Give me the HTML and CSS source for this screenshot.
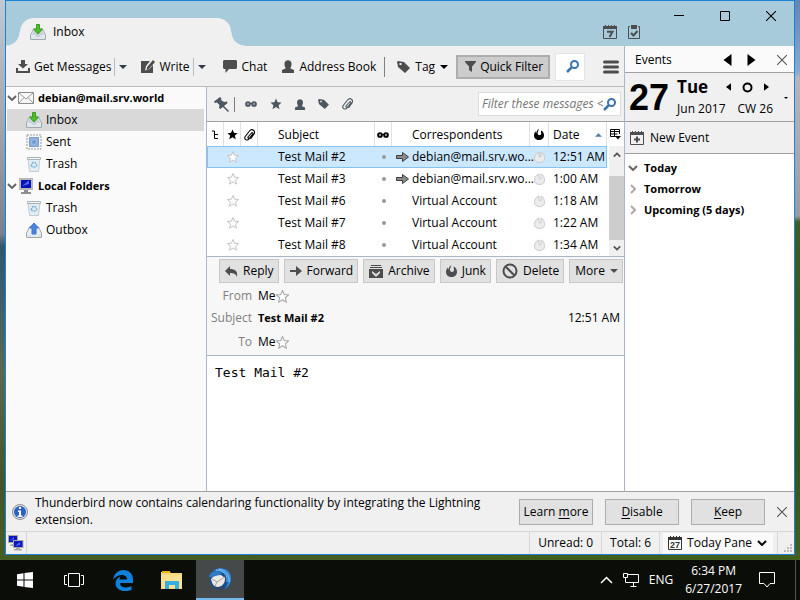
FILE: index.html
```html
<!DOCTYPE html>
<html lang="en">
<head>
<meta charset="utf-8">
<title>Inbox</title>
<link rel="stylesheet" href="styles.css">
</head>
<body>
<svg class="defs" aria-hidden="true">
  <defs>
    <symbol id="inbox" viewBox="0 0 16 16"><path d="M3.500 5h9l3 6v4.500H.5V11z" fill="#e9eef2" stroke="#a0a8ad"/><path d="M4 6h8l2 5h-3l-1 2H6l-1-2H2z" fill="#c8d0d5"/><path d="M1 12h4l1 1.500h4l1-1.500h4v3H1z" fill="#dfe8ee"/><path d="M6.500.5h3V5h3L8 10 3.500 5h3z" fill="#4cbf2c" stroke="#3a9a26"/></symbol>
    <symbol id="outbox" viewBox="0 0 16 16"><path d="M3.500 5h9l3 6v4.500H.5V11z" fill="#e9eef2" stroke="#a0a8ad"/><path d="M6 12V6H3.500L8 1l4.500 5H10v6z" fill="#4a86e0" stroke="#3f74cc"/><path d="M1 12h4l1 1.500h4l1-1.500h4v3H1z" fill="#dfe8ee"/></symbol>
    <symbol id="sent" viewBox="0 0 16 16"><path d="M1 1h14v14H1z" fill="#f8f8f8" stroke="#999" stroke-dasharray="2 1"/><path d="M3.500 3.500h9v9h-9z" fill="#8fb0de" stroke="#7c9fd2"/><circle cx="8" cy="8" r="2.500" fill="#7299d0" stroke="#a2bfe6"/></symbol>
    <symbol id="trash" viewBox="0 0 16 16"><path d="M2 2h12l-1.500 13.500h-9z" fill="#e3edf3" stroke="#c0ccd3"/><path d="M1.500 1.500h13v2h-13z" fill="#f3f7f9" stroke="#a9b4ba"/><path d="M5.500 10V7.500L8 6l2.500 1.500V10L8 11.500z" fill="none" stroke="#7fb2da" stroke-width="1.500" stroke-dasharray="2 1"/></symbol>
    <symbol id="envelope" viewBox="0 0 16 12"><path d="M.5.5h15v11H.5z" fill="#f8f8f8" stroke="#8c8c8c"/><path d="M1 1l7 6 7-6M1 11l5-5.500M15 11l-5-5.500" fill="none" stroke="#999"/></symbol>
    <symbol id="computer" viewBox="0 0 16 16"><path d="M1 0h14v12H1z" fill="#b9b9b9"/><path d="M3 2h10v8H3z" fill="#0b12b8"/><path d="M4 8l7-5.500V6z" fill="#4f6cf0"/><path d="M6 12h4v2h3v2H3v-2h3z" fill="#8f8f8f"/></symbol>
    <symbol id="network" viewBox="0 0 16 16"><path d="M0 0h10v8H0zM4 9h3v2H2v-1z" fill="#a8a8a8"/><path d="M1 1h8v6H1z" fill="#0b18c0"/><path d="M5 5h10.500v8H5zM8 13h4v1h2v1.500H6V14h2z" fill="#a8a8a8"/><path d="M6 6h8.500v6H6z" fill="#0b18c0"/><path d="M7 11l5-4v3zM2 6l4-4v2z" fill="#4f6cf0"/></symbol>
    <symbol id="download" viewBox="0 0 14 13"><path d="M5 0h4v4h3L7 8.500 2 4h3zM0 8h2v3h10V8h2v5H0z"/></symbol>
    <symbol id="write" viewBox="0 0 14 13"><path d="M0 1h9L5 6 4 10.500 8.500 9 12 5v8H0z"/><path d="M12 0l2 2-6 7-2.500 1L6.200 7z"/></symbol>
    <symbol id="chat" viewBox="0 0 14 13"><path d="M1 0h12l1 1v7l-1 1H6l-3.500 4V9H1L0 8V1z"/></symbol>
    <symbol id="person" viewBox="0 0 12 13"><path d="M2.500 3.500c0-4.500 7-4.500 7 0V5c0 1-1 2-1 3.500L12 10v3H0v-3l3.500-1.500C3.500 7 2.500 6 2.500 5z"/></symbol>
    <symbol id="tag" viewBox="0 0 13 12"><path fill-rule="evenodd" d="M0 1l1-1 6 1 6 6-5 5-7-6zM2.500 2v2h2V2z"/></symbol>
    <symbol id="funnel" viewBox="0 0 11 11"><path d="M0 0h11v1L7 5.500V11L4 9V5.500L0 1z"/></symbol>
    <symbol id="search" viewBox="0 0 13 13"><circle cx="8.500" cy="4.500" r="3.500" fill="none" stroke="currentColor" stroke-width="2"/><path d="M5.500 7.500L1 12" stroke="currentColor" stroke-width="2.500"/></symbol>
    <symbol id="menu" viewBox="0 0 16 14"><path d="M1.500 2h13M1.500 7h13M1.500 12h13" stroke="currentColor" stroke-width="3" stroke-linecap="round"/></symbol>
    <symbol id="pin" viewBox="0 0 15 15"><path d="M6 0l1.500 1.500L7 3l3 2 3-.5.5 1.500L6.500 12 5 11l.5-3L3 5.500 1 6 0 4.500z"/><path d="M9 9l5.500 5.500" stroke="currentColor" stroke-width="1.500"/></symbol>
    <symbol id="glasses" viewBox="0 0 12 6"><path d="M5 2.500h2" stroke="currentColor"/><circle cx="3" cy="3" r="2" fill="#999" stroke="currentColor" stroke-width="1.700"/><circle cx="9" cy="3" r="2" fill="#999" stroke="currentColor" stroke-width="1.700"/></symbol>
    <symbol id="star" viewBox="0 0 12 12"><path d="M6 .5l1.600 3.700 4 .3-3 2.700.9 4L6 9l-3.500 2.200.9-4-3-2.700 4-.3z"/></symbol>
    <symbol id="clip" viewBox="0 0 11 12"><path d="M3.500 8.500L7.500 4c.8-1 2 .2 1.200 1.200L5 9.800C3 12.500-.5 10 1.200 7.500L5.500 2c2.500-3 6.500 0 4.500 3L6.500 10M3.500 8.500c.5.700 1 .7 1.500.3" fill="none" stroke="currentColor" stroke-width="1.100"/></symbol>
    <symbol id="thread" viewBox="0 0 6 10"><path d="M0 1h2.500v7.500H6M2.500 4.500H6" fill="none" stroke="currentColor"/></symbol>
    <symbol id="flame" viewBox="0 0 11 12"><path d="M5.500 0C4.800 2 4 3 4 5c0 2.500 4 2.500 4 0 0-1.500-.6-2-.2-3.500C10 2.500 11 4.500 11 7c0 3-2.500 5-5.500 5S0 10 0 7c0-2 1-3 1.300-4.500.7.700.7 1.500 1 2.500C2.500 3 3.500 1 5.500 0z"/></symbol>
    <symbol id="unjunk" viewBox="0 0 11 12"><path d="M5 1C2 2 .5 4.500.5 7.500c0 2.500 2 4 5 4s5-1.500 5-4c0-3-1-5.500-3.500-6.500v4c0 1.500-2 1.500-2 0z"/></symbol>
    <symbol id="columns" viewBox="0 0 11 11"><path d="M9.500 5V.5h-9v7H6M.5 2.500h9M.5 5h7M4.500.5v7" fill="none" stroke="currentColor"/><path d="M5 7h6L8 10.500z"/></symbol>
    <symbol id="down" viewBox="0 0 8 4"><path d="M0 0h8L4 4z"/></symbol>
    <symbol id="up" viewBox="0 0 8 4"><path d="M0 4h8L4 0z"/></symbol>
    <symbol id="left" viewBox="0 0 8 12"><path d="M8 0v12L0 6z"/></symbol>
    <symbol id="right" viewBox="0 0 8 12"><path d="M0 0v12l8-6z"/></symbol>
    <symbol id="chev" viewBox="0 0 10 6"><path d="M1 1l4 4 4-4" fill="none" stroke="currentColor" stroke-width="2"/></symbol>
    <symbol id="close" viewBox="0 0 10 10"><path d="M0 0l10 10M10 0L0 10" stroke="currentColor" stroke-width="1.100"/></symbol>
    <symbol id="arrow" viewBox="0 0 13 10"><path d="M.5 3.500h6v-3L12.500 5l-6 4.500v-3h-6z" fill="#8b8b8b" stroke="#3f3f3f"/></symbol>
    <symbol id="calendar" viewBox="0 0 14 14"><path d="M.5 3v10.500h13V3" fill="none" stroke="currentColor"/><path d="M0 1h2V0h1v1h2V0h1v1h2V0h1v1h2V0h1v1h2v3H0z"/></symbol>
    <symbol id="reply" viewBox="0 0 13 11"><path d="M5 0v3c5 0 8 2 7 8-1-3-3-4-7-4v3L0 5z"/></symbol>
    <symbol id="forward" viewBox="0 0 12 10"><path d="M0 4h6V0l6 5-6 5V6H0z"/></symbol>
    <symbol id="archive" viewBox="0 0 14 13"><path d="M2 .5h10M1 2.500h12" stroke="currentColor"/><path fill-rule="evenodd" d="M0 4h14v9H0zM3 6v2l4 4 4-4V6L7 9z"/></symbol>
    <symbol id="block" viewBox="0 0 16 16"><circle cx="8" cy="8" r="6.500" fill="none" stroke="currentColor" stroke-width="2"/><path d="M3.500 3.500l9 9" stroke="currentColor" stroke-width="2"/></symbol>
  </defs>
</svg>

<main class="window">
  <header class="titlebar">
    <div class="tab">
      <svg class="i16"><use href="#inbox"/></svg><span>Inbox</span>
    </div>
    <div class="title-side">
      <div class="caption">
        <button aria-label="Minimize"><svg width="10" height="10"><path d="M0 4.500h10" stroke="#000"/></svg></button>
        <button aria-label="Maximize"><svg width="10" height="10"><path d="M.5.5h9v9h-9z" fill="none" stroke="#000"/></svg></button>
        <button aria-label="Close"><svg width="10" height="10"><use href="#close"/></svg></button>
      </div>
      <div class="cal-buttons">
        <button aria-label="Calendar"><svg width="14" height="14" viewBox="0 0 14 14"><use href="#calendar"/><path d="M4 6.800h5.500L6.500 12" fill="none" stroke="currentColor" stroke-width="2"/></svg></button>
        <button aria-label="Tasks"><svg width="12" height="14" viewBox="0 0 12 14"><path d="M2 1.500H.5v12h11v-12H10" fill="none" stroke="currentColor"/><path d="M3 0h6v4H3z"/><path d="M3 8l2.500 2.500L9.500 6" fill="none" stroke="currentColor" stroke-width="2"/></svg></button>
      </div>
    </div>
  </header>

  <div class="main">
    <section class="left">
      <div class="toolbar">
        <button class="tool"><svg width="14" height="13"><use href="#download"/></svg>Get Messages</button>
        <button class="drop" aria-label="Get messages menu"><svg width="8" height="4"><use href="#down"/></svg></button>
        <button class="tool"><svg width="14" height="13"><use href="#write"/></svg>Write</button>
        <button class="drop" aria-label="Write menu"><svg width="8" height="4"><use href="#down"/></svg></button>
        <button class="tool chat"><svg width="14" height="13"><use href="#chat"/></svg>Chat</button>
        <button class="tool book"><svg width="12" height="13"><use href="#person"/></svg>Address Book</button>
        <span class="rule"></span>
        <button class="tool tagb"><svg width="13" height="12"><use href="#tag"/></svg>Tag<svg width="8" height="4"><use href="#down"/></svg></button>
        <button class="tool quick"><svg width="11" height="11"><use href="#funnel"/></svg>Quick Filter</button>
        <button class="find" aria-label="Search"><svg width="13" height="13"><use href="#search"/></svg></button>
        <button class="menu" aria-label="Menu"><svg width="16" height="14"><use href="#menu"/></svg></button>
      </div>

      <div class="panes">
        <nav class="folders">
          <a href="#" class="account"><svg class="twist" width="10" height="6"><use href="#chev"/></svg><svg width="16" height="12"><use href="#envelope"/></svg>debian@mail.srv.world</a>
          <a href="#" class="folder on"><svg class="i16"><use href="#inbox"/></svg>Inbox</a>
          <a href="#" class="folder"><svg class="i16"><use href="#sent"/></svg>Sent</a>
          <a href="#" class="folder"><svg class="i16"><use href="#trash"/></svg>Trash</a>
          <a href="#" class="account"><svg class="twist" width="10" height="6"><use href="#chev"/></svg><svg class="i16"><use href="#computer"/></svg>Local Folders</a>
          <a href="#" class="folder"><svg class="i16"><use href="#trash"/></svg>Trash</a>
          <a href="#" class="folder"><svg class="i16"><use href="#outbox"/></svg>Outbox</a>
        </nav>

        <div class="content">
          <div class="filterbar">
            <button aria-label="Keep filters"><svg width="15" height="15"><use href="#pin"/></svg></button>
            <span class="short-rule"></span>
            <button aria-label="Unread"><svg width="12" height="6"><use href="#glasses"/></svg></button>
            <button aria-label="Starred"><svg width="12" height="12"><use href="#star"/></svg></button>
            <button aria-label="Contact"><svg width="10" height="11"><use href="#person"/></svg></button>
            <button aria-label="Tags"><svg width="11" height="10"><use href="#tag"/></svg></button>
            <button aria-label="Attachment"><svg width="11" height="12"><use href="#clip"/></svg></button>
            <label class="filter"><input type="text" aria-label="Filter these messages" placeholder="Filter these messages &lt;Ctrl+Shift+K&gt;"><svg width="13" height="13"><use href="#search"/></svg></label>
          </div>

          <table class="messages">
            <colgroup><col class="c17"><col class="c17"><col class="c17"><col><col class="c17"><col class="c-cor"><col class="c-junk"><col class="c-date"><col class="c-end"></colgroup>
            <thead>
              <tr>
                <th aria-label="Thread"><svg width="6" height="10"><use href="#thread"/></svg></th>
                <th aria-label="Starred"><svg width="11" height="11"><use href="#star"/></svg></th>
                <th aria-label="Attachment"><svg width="11" height="12"><use href="#clip"/></svg></th>
                <th class="subj">Subject</th>
                <th aria-label="Read"><svg width="12" height="6"><use href="#glasses"/></svg></th>
                <th class="cor">Correspondents</th>
                <th aria-label="Junk"><svg width="10" height="11"><use href="#flame"/></svg></th>
                <th class="date"><span>Date<svg width="7" height="4"><use href="#up"/></svg></span></th>
                <th aria-label="Columns"><svg width="11" height="11"><use href="#columns"/></svg></th>
              </tr>
            </thead>
            <tbody>
              <tr class="sel"><td></td><td class="st"><svg width="12" height="12"><use href="#star"/></svg></td><td></td><td class="subj">Test Mail #2</td><td><i class="dot"></i></td><td class="cor to"><svg width="13" height="10"><use href="#arrow"/></svg>debian@mail.srv.wo...</td><td class="jk"><svg width="11" height="12"><use href="#unjunk"/></svg></td><td class="date">12:51 AM</td>
                <td class="bar" rowspan="5"><div class="scroll"><svg width="8" height="6"><use href="#chev" transform="rotate(180 4 3)"/></svg><span></span><svg width="8" height="6"><use href="#chev"/></svg></div></td></tr>
              <tr><td></td><td class="st"><svg width="12" height="12"><use href="#star"/></svg></td><td></td><td class="subj">Test Mail #3</td><td><i class="dot"></i></td><td class="cor to"><svg width="13" height="10"><use href="#arrow"/></svg>debian@mail.srv.wo...</td><td class="jk"><svg width="11" height="12"><use href="#unjunk"/></svg></td><td class="date">1:00 AM</td></tr>
              <tr><td></td><td class="st"><svg width="12" height="12"><use href="#star"/></svg></td><td></td><td class="subj">Test Mail #6</td><td><i class="dot"></i></td><td class="cor">Virtual Account</td><td class="jk"><svg width="11" height="12"><use href="#unjunk"/></svg></td><td class="date">1:18 AM</td></tr>
              <tr><td></td><td class="st"><svg width="12" height="12"><use href="#star"/></svg></td><td></td><td class="subj">Test Mail #7</td><td><i class="dot"></i></td><td class="cor">Virtual Account</td><td class="jk"><svg width="11" height="12"><use href="#unjunk"/></svg></td><td class="date">1:22 AM</td></tr>
              <tr><td></td><td class="st"><svg width="12" height="12"><use href="#star"/></svg></td><td></td><td class="subj">Test Mail #8</td><td><i class="dot"></i></td><td class="cor">Virtual Account</td><td class="jk"><svg width="11" height="12"><use href="#unjunk"/></svg></td><td class="date">1:34 AM</td></tr>
            </tbody>
          </table>

          <article class="reader">
            <div class="head">
              <div class="actions">
                <button><svg width="13" height="11"><use href="#reply"/></svg>Reply</button>
                <button><svg width="12" height="10"><use href="#forward"/></svg>Forward</button>
                <button><svg width="14" height="13"><use href="#archive"/></svg>Archive</button>
                <button><svg width="11" height="12"><use href="#flame"/></svg>Junk</button>
                <button><svg width="16" height="16"><use href="#block"/></svg>Delete</button>
                <button>More<svg width="8" height="4"><use href="#down"/></svg></button>
              </div>
              <div class="field"><span class="name">From</span><span>Me</span><svg class="fstar" width="13" height="13"><use href="#star"/></svg></div>
              <div class="field"><span class="name">Subject</span><b>Test Mail #2</b><time>12:51 AM</time></div>
              <div class="field last"><span class="name">To</span><span>Me</span><svg class="fstar" width="13" height="13"><use href="#star"/></svg></div>
            </div>
            <pre class="body">Test Mail #2</pre>
          </article>
        </div>
      </div>
    </section>

    <aside class="events">
      <div class="ev-title"><span>Events</span>
        <button aria-label="Previous"><svg width="9" height="12"><use href="#left"/></svg></button>
        <button aria-label="Next"><svg width="9" height="12"><use href="#right"/></svg></button>
        <button class="x" aria-label="Close pane"><svg width="10" height="10"><use href="#close"/></svg></button>
      </div>
      <div class="ev-day">
        <strong class="num">27</strong>
        <div class="info">
          <div class="line"><strong>Tue</strong><span class="nav"><button aria-label="Previous day"><svg width="5" height="8"><use href="#left"/></svg></button><button aria-label="Today"><svg width="11" height="11"><circle cx="5.500" cy="5.500" r="4" fill="none" stroke="#000" stroke-width="2"/></svg></button><button aria-label="Next day"><svg width="5" height="8"><use href="#right"/></svg></button></span></div>
          <div class="line"><span>Jun 2017</span><span>CW 26</span></div>
        </div>
        <button class="mini" aria-label="Show calendar"><svg width="4" height="2"><use href="#down"/></svg></button>
      </div>
      <button class="new"><svg width="14" height="14" viewBox="0 0 14 14"><use href="#calendar"/><path d="M4 8.500h6M7 5.500v6" stroke="currentColor" stroke-width="2"/></svg>New Event</button>
      <div class="agenda">
        <a href="#"><svg width="10" height="6"><use href="#chev"/></svg>Today</a>
        <a href="#" class="shut"><svg width="10" height="6"><use href="#chev"/></svg>Tomorrow</a>
        <a href="#" class="shut"><svg width="10" height="6"><use href="#chev"/></svg>Upcoming (5 days)</a>
      </div>
    </aside>
  </div>

  <div class="notice">
    <svg width="16" height="16" viewBox="0 0 16 16"><circle cx="8" cy="8" r="7.500" fill="#e4e4e4" stroke="#8e8e8e"/><circle cx="8" cy="8" r="6" fill="#2a62c9"/><path d="M7 3h2v2H7zM6 6.500h3v5h1.500V13h-5v-1.500H7V8H6z" fill="#fff"/></svg>
    <p>Thunderbird now contains calendaring functionality by integrating the Lightning extension.</p>
    <button class="btn">Learn <u>m</u>ore</button>
    <button class="btn"><u>D</u>isable</button>
    <button class="btn"><u>K</u>eep</button>
    <button class="x" aria-label="Dismiss"><svg width="10" height="10"><use href="#close"/></svg></button>
  </div>

  <footer class="status">
    <span class="net"><svg width="16" height="16"><use href="#network"/></svg></span>
    <span class="cell unread">Unread: 0</span>
    <span class="cell total">Total: 6</span>
    <span class="cell pane"><button><span class="cal27"><svg width="14" height="14"><use href="#calendar"/></svg><b>27</b></span>Today Pane<svg width="10" height="6"><use href="#chev"/></svg></button></span>
    <span class="grip"><svg width="8" height="8"><path d="M6 0h2v2H6zM3 3h2v2H3zM6 3h2v2H6zM0 6h2v2H0zM3 6h2v2H3zM6 6h2v2H6z" fill="#bbb"/></svg></span>
  </footer>
</main>

<footer class="taskbar">
  <button aria-label="Start"><svg width="16" height="16"><path d="M0 2.300l6.500-1v6.200H0zM7.500 1.100L16 0v7.500H7.500zM0 8.500h6.500v6.200l-6.500-1zM7.500 8.500H16V16l-8.500-1.100z" fill="#fff"/></svg></button>
  <button aria-label="Task view"><svg width="20" height="14"><path d="M4.500.5h11v13h-11zM3 2.500H.5v9H3M17 2.500h2.500v9H17" fill="none" stroke="#fff"/></svg></button>
  <button class="edge" aria-label="Edge"><svg width="20" height="21" viewBox="0 0 20 21"><path d="M0 9.500C1 4 5 0 10.500 0 16 0 20 4 20 9.500V13H7c0 5 7 5.500 11.500 3v4C11 23 2.500 20 2.500 13.500 2.600 10 5 7.500 7.500 6.500 6.800 7.500 6.500 8.500 6.500 9.500h7.500C14 3.500 5 3.500 0 9.500z" fill="#0f80dc"/></svg></button>
  <button aria-label="File Explorer"><svg width="22" height="18"><path d="M0 1h9l1 1h11v16H0z" fill="#f8d778"/><path d="M1 0h8v2H1z" fill="#eeb11c"/><path d="M0 4h21v13H0z" fill="#fbe08f"/><path d="M4 18v-8h14v8h-4v-4H8v4z" fill="#35aee2"/></svg></button>
  <button class="active" aria-label="Thunderbird"><svg width="24" height="24" viewBox="0 0 24 24"><circle cx="12.500" cy="12" r="11" fill="#1b4f8c"/><path d="M5 4c5-4 12-3.500 16 1 4 6 2 14-5 17.500 4-4 5-9 3-13C16 5 10 3 5 4z" fill="#3b8bd6"/><path d="M11 2c6 1 11 6 10 13M8 3c7 0 12 5 11 12" fill="none" stroke="#7cc0f2"/><path d="M1 10c0-3 3-6 8-6 2 0 4 1 5 3L4 10z" fill="#2f7cc6"/><path d="M3 12c2-3 6-4 10-4l4 3c0 5-2 8-7 9-4 0-6-3-7-8z" fill="#ece9e4"/><path d="M4 12l5 3 8-5M9 15l-2 4" fill="none" stroke="#a8a098"/><path d="M6 19c3 3 8 2 11-1l-2 4c-4 1-7 0-9-3z" fill="#3c4452"/></svg></button>
  <div class="tray">
    <svg width="13" height="8"><path d="M1 7l5.500-5.500L12 7" fill="none" stroke="#fff" stroke-width="1.500"/></svg>
    <svg width="16" height="14"><path d="M4 1.500h11.500v8H4M7.500 13.500h6M10.500 9.500v4M.5.500h4v4h-4zM2.500 4.500v5h2" fill="none" stroke="#fff"/></svg>
    <span>ENG</span>
    <time>6:34 PM<br>6/27/2017</time>
    <svg width="16" height="16"><path d="M.5.500h15v11h-4.500l-3 3.500-3-3.500H.5z" fill="none" stroke="#fff"/></svg>
    <i></i>
  </div>
</footer>
</body>
</html>
```

FILE: styles.css
```css
* { box-sizing: border-box; }
body {
  margin: 0;
  min-height: 100vh;
  display: flex;
  flex-direction: column;
  font: 12px/16px "Open Sans", "Noto Sans", sans-serif;
  color: #000;
  background:
    linear-gradient(#5f86b5, #88aad0 12%, #b9b6bb 13%, #9a9ca3 36%, #405c25 37%, #35521c 75%, #46651f) right / 50% 100% no-repeat,
    linear-gradient(#c4c8d0, #a3a7b2 20%, #77818f 39%, #33566f 41%, #3d5f6e 50%, #586a4e 62%, #42572a 80%, #486022);
}
.defs { position: absolute; width: 0; height: 0; }
svg { flex: none; display: block; fill: currentColor; }
.i16 { width: 16px; height: 16px; }
button {
  display: flex;
  align-items: center;
  padding: 0;
  border: 0;
  background: none;
  font: inherit;
  color: inherit;
  white-space: nowrap;
}
a { color: inherit; text-decoration: none; }

.window {
  flex: 1;
  display: flex;
  flex-direction: column;
  margin: 0 5px 5px;
  border: 1px solid #1883d7;
  background: #f0f0f0;
}

.titlebar {
  display: flex;
  justify-content: space-between;
  height: 45px;
  background: #a8cbdb;
}
.tab {
  position: relative;
  align-self: flex-end;
  display: flex;
  align-items: center;
  gap: 7px;
  width: 211px;
  height: 28px;
  margin-left: 14px;
  padding-left: 10px;
  border-radius: 14px 14px 0 0;
  background: #f0f0f0;
}
.tab::before, .tab::after {
  content: "";
  position: absolute;
  bottom: 0;
  width: 14px;
  height: 14px;
}
.tab::before { left: -14px; background: radial-gradient(circle at 0 0, transparent 13px, #f0f0f0 14px); }
.tab::after { right: -14px; background: radial-gradient(circle at 100% 0, transparent 13px, #f0f0f0 14px); }
.title-side { display: flex; flex-direction: column; }
.caption { display: flex; height: 24px; padding-top: 6px; }
.caption button { width: 46px; justify-content: center; }
.cal-buttons { display: flex; gap: 11px; margin-left: -53px; color: #4d4d4d; }

.main { flex: 1; display: flex; min-height: 0; }
.left { flex: 1; min-width: 0; display: flex; flex-direction: column; }

.toolbar {
  display: flex;
  align-items: center;
  height: 41px;
  padding: 1px 5px 0 10px;
  border-bottom: 1px solid #bcbcbc;
}
.toolbar > * { flex: none; }
.tool { gap: 4px; }
.tool > svg:first-child, .menu { color: #4d4d4d; }
.drop {
  height: 18px;
  margin: 0 14px 0 3px;
  padding-left: 4px;
  border-left: 1px solid #bcbcbc;
  color: #2f3b47;
}
.chat { gap: 5px; margin-left: 3px; }
.book { margin-left: 15px; gap: 5px; }
.rule { width: 1px; height: 20px; margin: 0 12px 0 8px; background: #808080; }
.tagb { gap: 5px; }
.quick {
  gap: 4px;
  height: 24px;
  margin-left: 8px;
  padding: 0 5px 0 7px;
  border: 2px solid #adadad;
  background: #cccccc;
}
.find {
  justify-content: center;
  padding-left: 4px;
  width: 30px;
  height: 28px;
  margin: 0 auto 0 5px;
  border: 1px solid #e4e4e4;
  background: #fff;
  color: #3b74ad;
}

.panes { flex: 1; display: flex; min-height: 0; }
.folders { width: 200px; padding-right: 2px; background: #fafafa; }
.folders a { display: flex; align-items: center; height: 22px; }
.account { gap: 4px; padding-left: 1px; font-size: 11px; font-weight: 700; }
.twist { margin-right: -3px; color: #666; }
.folder { gap: 4px; margin-left: 1px; padding-left: 19px; }
.on { background: #d9d9d9; }

.content {
  flex: 1;
  min-width: 0;
  display: flex;
  flex-direction: column;
  border-left: 1px solid #a9b7c9;
}
.filterbar {
  display: flex;
  align-items: center;
  gap: 13px;
  height: 35px;
  padding: 0 3px 0 7px;
  border-bottom: 1px solid #a0a0a0;
  color: #4b5763;
}
.short-rule { width: 1px; height: 15px; margin: 0 -3px 0 -8px; background: #808080; }
.filter {
  display: flex;
  align-items: center;
  width: 143px;
  height: 24px;
  margin-left: auto;
  padding: 0 4px 0 3px;
  border: 1px solid #dcdcdc;
  background: #fff;
  color: #3b74ad;
}
.filter input {
  flex: 1;
  min-width: 0;
  padding: 0;
  border: 0;
  outline: 0;
  font: inherit;
  background: none;
}
.filter input::placeholder { color: #757575; font-style: italic; opacity: 1; }

.messages {
  width: 100%;
  table-layout: fixed;
  border-spacing: 0;
  background: #fff;
  border-bottom: 1px solid #a9b7c9;
}
.c17 { width: 17px; }
.c-cor { width: 138px; }
.c-junk { width: 19px; }
.c-date { width: 58px; }
.c-end { width: 17px; }
.messages th, .messages td {
  height: 22px;
  padding: 0;
  font-weight: 400;
  text-align: left;
  white-space: nowrap;
}
.messages th { height: 24px; padding-top: 1px; border-right: 1px solid #e0e0e0; }
.messages th:last-child { border: 0; }
.messages svg { margin: 0 auto; }
.messages .subj { padding-left: 20px; }
.messages .cor { padding-left: 20px; }
.messages .to { padding-left: 4px; }
.to svg { display: inline-block; margin: 0 3px 0 0; vertical-align: -1px; }
.messages .date { padding-left: 4px; }
.date span { display: flex; align-items: center; justify-content: space-between; }
.date span svg { margin: 0 4px 0 0; color: #4a7d9f; }
.st svg { fill: #fcfcfc; stroke: #c4c4c4; }
.jk svg { fill: #ececec; stroke: #c8c8c8; }
.dot { display: block; width: 4px; height: 4px; margin: 0 auto; border-radius: 50%; background: #999; }
.sel td:not(.bar) { background: #cce8ff; border: solid #84c3f5; border-width: 1px 0; }
.sel td:first-child { border-left-width: 1px; }
.messages .sel td.date { border-right-width: 1px; }
.messages .bar { height: 110px; padding-left: 2px; }
.scroll {
  display: flex;
  flex-direction: column;
  align-items: center;
  height: 110px;
  padding: 6px 0 5px;
  background: #f0f0f0;
  color: #505050;
}
.scroll span { width: 100%; height: 64px; margin: 18px 0 auto; background: #cdcdcd; }

.reader { flex: 1; display: flex; flex-direction: column; }
.head { padding: 2px 1px 0 12px; border-bottom: 1px solid #a9b7c9; background: #f7f7f7; }
.actions { display: flex; justify-content: space-between; }
.actions button {
  gap: 5px;
  height: 24px;
  padding: 0 4px 0 5px;
  border: 1px solid #c8c8c8;
  background: #e1e1e1;
}
.actions svg { color: #4d4d4d; }
.field { display: flex; align-items: center; height: 22px; margin: 2px 3px 0 -8px; }
.field + .field { margin-top: 0; }
.field .name { width: 41px; margin-right: 6px; text-align: right; color: #808080; }
.field b { font-size: 11px; }
.field time { margin-left: auto; }
.field.last { height: 26px; }
.fstar { fill: #fff; stroke: #a8a8a8; }
.body {
  flex: 1;
  margin: 0;
  padding: 9px 8px;
  background: #fff;
  font: 13px/16px "DejaVu Sans Mono", monospace;
}

.events {
  width: 170px;
  display: flex;
  flex-direction: column;
  border-left: 1px solid #a9b7c9;
  background: #fff;
}
.ev-title {
  display: flex;
  align-items: center;
  gap: 15px;
  height: 27px;
  padding: 1px 7px 0 10px;
  border-bottom: 1px solid #a0a0a0;
  background: #fafafa;
}
.ev-title span { margin-right: auto; }
.ev-title .x { margin-left: 6px; }
.x { color: #555; }
.ev-day {
  display: flex;
  align-items: center;
  height: 49px;
  padding: 2px 0 0 4px;
  border-bottom: 1px solid #a0a0a0;
  background: #f0f0f0;
}
.num { font: 700 36px/40px "Liberation Sans", Arial, sans-serif; }
.info { width: 96px; margin-left: 8px; }
.line { display: flex; align-items: center; justify-content: space-between; height: 22px; }
.line strong { font-size: 17px; }
.nav { display: flex; align-items: center; gap: 11px; margin-right: 4px; }
.mini { margin: 0 6px 0 auto; }
.new {
  gap: 6px;
  height: 32px;
  padding-left: 5px;
  border-bottom: 1px solid #a0a0a0;
  background: #f0f0f0;
}
.new svg { color: #4d4d4d; }
.agenda { padding-top: 3px; font-size: 11px; font-weight: 700; }
.agenda a { display: flex; align-items: center; gap: 6px; height: 21px; padding-left: 3px; }
.agenda svg { color: #666; }
.shut svg { transform: rotate(-90deg); color: #aaa; }

.notice {
  display: flex;
  align-items: center;
  height: 40px;
  padding: 0 7px 0 6px;
  border-top: 1px solid #a0a0a0;
}
.notice p { flex: 1; align-self: flex-start; margin: 2px 20px 0 7px; line-height: 17px; }
.btn {
  display: block;
  text-align: center;
  width: 74px;
  height: 26px;
  margin-right: 12px;
  border: 1px solid #adadad;
  background: #e1e1e1;
}
.btn u { text-underline-offset: 2px; }

.status { display: flex; height: 23px; border-top: 1px solid #d7d7d7; }
.status > span { display: flex; align-items: center; }
.net { width: 21px; padding-left: 2px; border-right: 1px solid #d7d7d7; margin-right: auto; }
.status .net { margin-right: auto; }
.cell { border-left: 1px solid #d7d7d7; }
.unread, .total { padding: 0 8px; }
.pane { padding-left: 3px; }
.pane button { gap: 5px; height: 20px; padding: 0 6px 0 5px; background: #fafafa; }
.cal27 { display: grid; place-items: center; color: #333; }
.cal27 > * { grid-area: 1 / 1; }
.cal27 b { padding-top: 4px; font: 700 9px/10px "Liberation Sans", sans-serif; }
.grip { width: 17px; margin-left: 4px; border-left: 1px solid #d7d7d7; justify-content: flex-end; padding: 9px 2px 0 0; }

.taskbar { display: flex; height: 40px; background: #0b0d08; color: #fff; }
.taskbar button { justify-content: center; width: 49px; }
.taskbar .active { width: 48px; background: #45494a; border-bottom: 2px solid #76b9ed; }
.tray { display: flex; align-items: center; gap: 10px; margin-left: auto; }
.tray time { margin: 0 7px 0 2px; text-align: center; line-height: 18px; }
.tray i { width: 1px; height: 40px; margin: 0 4px 0 10px; background: #555; }
```
